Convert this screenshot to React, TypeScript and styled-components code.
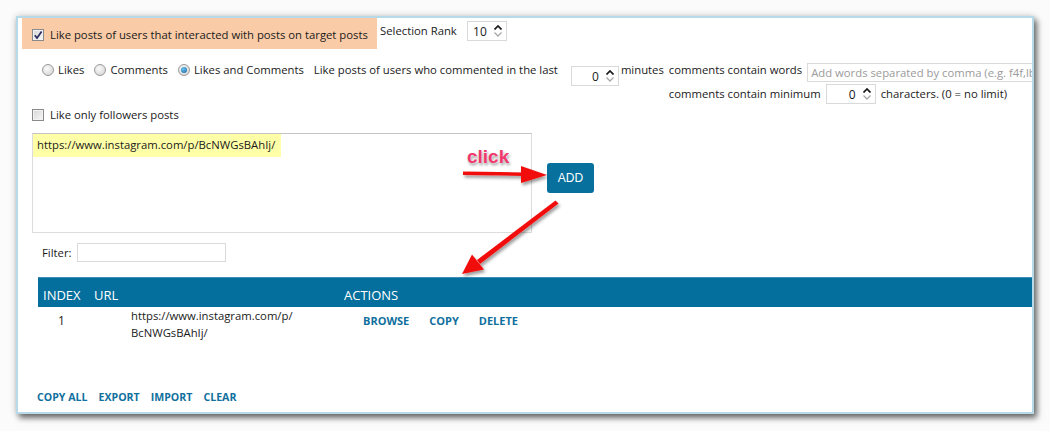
import React from 'react'
import styled, { createGlobalStyle } from 'styled-components'

const GlobalStyle = createGlobalStyle`
  html, body {
    margin: 0;
    padding: 0;
    background: #fbfbfb;
  }
  body {
    font-family: 'Open Sans', 'Noto Sans', sans-serif;
    font-size: 11.3px;
    color: #1a1a1a;
  }
`

const Screen = styled.div`
  width: 1050px;
  height: 431px;
  padding: 16px 0 0 16px;
  box-sizing: border-box;
  overflow: hidden;
`

const Window = styled.div`
  position: relative;
  width: 1018px;
  height: 398px;
  box-sizing: border-box;
  border: 2px solid #b7dae8;
  background: #fff;
  box-shadow: 3px 4px 6px rgba(0, 0, 0, 0.55), 0 0 7px rgba(0, 0, 0, 0.18);
  overflow: hidden;
  display: flex;
  flex-direction: column;
`

const TopRow = styled.div`
  display: flex;
  align-items: flex-start;
  padding-left: 4px;
`

const Highlight = styled.div`
  width: 355px;
  height: 31px;
  box-sizing: border-box;
  padding: 3px 0 0 10px;
  background: #f9cba7;
  display: flex;
  align-items: center;
  gap: 6px;
`

const Text = styled.span<{ $ml?: number; $mt?: number }>`
  line-height: 16px;
  white-space: nowrap;
  margin-left: ${p => p.$ml ?? 0}px;
  margin-top: ${p => p.$mt ?? 0}px;
`

const Box = styled.span`
  width: 12px;
  height: 12px;
  box-sizing: border-box;
  border: 1px solid #8a8a8a;
  background: linear-gradient(135deg, #d6d6d6, #f7f7f7);
  box-shadow: inset 0 0 0 1px #f2f2f2;
  display: inline-flex;
  align-items: center;
  justify-content: center;
  flex: none;
`

const Round = styled.span<{ $checked?: boolean }>`
  width: 12px;
  height: 12px;
  box-sizing: border-box;
  border-radius: 50%;
  border: 1px solid #9a9a9a;
  background: radial-gradient(circle at 40% 35%, #fafafa, #cfcfcf);
  display: inline-flex;
  align-items: center;
  justify-content: center;
  flex: none;

  &::after {
    content: '';
    display: ${p => (p.$checked ? 'block' : 'none')};
    width: 6px;
    height: 6px;
    border-radius: 50%;
    background: radial-gradient(circle at 40% 35%, #6cc4f2, #0d5f9c);
  }
`

const Option = styled.label`
  display: flex;
  align-items: center;
  gap: 4px;
  height: 16px;
`

const SpinBox = styled.div<{ $w: number; $ml?: number; $mt?: number }>`
  width: ${p => p.$w}px;
  height: 20px;
  box-sizing: border-box;
  margin-left: ${p => p.$ml ?? 0}px;
  margin-top: ${p => p.$mt ?? 0}px;
  border: 1px solid #d9d9d9;
  background: #fff;
  display: flex;
  align-items: center;
  justify-content: flex-end;
  padding-right: 4px;
  flex: none;
  font-size: 12px;
`

const SpinArrows = styled.div`
  display: flex;
  flex-direction: column;
  gap: 2px;
  margin-left: 7px;
`

const OptionsRow = styled.div`
  display: flex;
  align-items: flex-start;
  margin-top: 13px;
  padding-left: 24px;
`

const Radios = styled.div`
  display: flex;
  gap: 10px;
`

const RightGroup = styled.div`
  display: flex;
  flex-direction: column;
  margin-left: 5px;
`

const FieldRow = styled.div`
  display: flex;
  align-items: flex-start;
`

const WordsInput = styled.input`
  width: 240px;
  height: 19px;
  box-sizing: border-box;
  margin: 1px 0 0 5px;
  border: 1px solid #dadada;
  padding: 0 3px;
  font-family: inherit;
  font-size: 11.3px;
  flex: none;

  &::placeholder {
    color: #9b9b9b;
  }
`

const FollowersRow = styled.div`
  display: flex;
  align-items: center;
  gap: 6px;
  margin-top: 3px;
  padding-left: 14px;
  height: 16px;
`

const InputArea = styled.div`
  display: flex;
  align-items: flex-start;
  margin-top: 10px;
  padding-left: 14px;
`

const UrlBox = styled.div`
  width: 500px;
  height: 100px;
  box-sizing: border-box;
  border: 1px solid #dcdcdc;
  border-top-color: #c4c4c4;
`

const UrlMark = styled.span`
  display: inline-block;
  background: #ffffa8;
  padding: 3px 6px 4px 4px;
  line-height: 16px;
  font-size: 11.3px;
`

const AddButton = styled.button`
  width: 47px;
  height: 30px;
  margin: 30px 0 0 15px;
  border: none;
  border-radius: 3px;
  background: #07709d;
  color: #fff;
  font-family: 'Liberation Sans', Arial, sans-serif;
  font-size: 12px;
  padding: 0;
`

const FilterRow = styled.div`
  display: flex;
  align-items: center;
  margin-top: 10px;
  padding-left: 24px;
`

const FilterInput = styled.input`
  width: 149px;
  height: 19px;
  box-sizing: border-box;
  margin-left: 5px;
  border: 1px solid #dadada;
`

const Table = styled.div`
  margin: 15px 0 0 20px;
`

const HeadRow = styled.div`
  display: grid;
  grid-template-columns: 56px 250px 1fr;
  height: 30px;
  box-sizing: border-box;
  padding-top: 4px;
  align-items: center;
  background: #046e9c;
  border-top: 1px solid #3b8fb6;
  color: #fff;
  font-size: 13px;
`

const HeadCell = styled.div<{ $pl?: number }>`
  padding-left: ${p => p.$pl ?? 0}px;
`

const BodyRow = styled.div`
  display: grid;
  grid-template-columns: 56px 250px 1fr;
  align-items: flex-start;
`

const IndexCell = styled.div`
  padding: 6px 0 0 20px;
  line-height: 16px;
  font-size: 12px;
`

const UrlCell = styled.div`
  padding-left: 37px;
  width: 175px;
  line-height: 17px;
  font-size: 11.3px;
`

const Actions = styled.div`
  display: flex;
  gap: 20px;
  padding: 6px 0 0 19px;
`

const LinkText = styled.a<{ $size?: number }>`
  color: #11709e;
  font-weight: 700;
  font-size: ${p => p.$size ?? 10.6}px;
  line-height: 16px;
  text-decoration: none;
  cursor: pointer;
`

const Footer = styled.div`
  display: flex;
  gap: 11px;
  margin-top: auto;
  padding: 0 0 7px 19px;
`

const Overlay = styled.svg`
  position: absolute;
  left: 0;
  top: 0;
  width: 100%;
  height: 100%;
  pointer-events: none;
`

const ClickLabel = styled.span`
  position: absolute;
  left: 449px;
  top: 129px;
  font-family: 'Liberation Sans', Arial, sans-serif;
  font-weight: 700;
  font-size: 19px;
  line-height: 19px;
  color: #f0386c;
  text-shadow: 0 0 2px #fff, 1px 2px 3px rgba(0, 0, 0, 0.45);
`

const CheckBox = ({ checked }: { checked?: boolean }) => (
  <Box>
    {checked && (
      <svg width="10" height="10" viewBox="0 0 10 10">
        <path d="M1.8 5.2 L4 8 L8.6 1.4" fill="none" stroke="#2d2d62" strokeWidth="1.7" />
      </svg>
    )}
  </Box>
)

const Spin = ({ value, w, ml, mt }: { value: string; w: number; ml?: number; mt?: number }) => (
  <SpinBox $w={w} $ml={ml} $mt={mt}>
    <span>{value}</span>
    <SpinArrows>
      <svg width="8" height="5" viewBox="0 0 8 5">
        <path d="M0.5 4.5 L4 1 L7.5 4.5" fill="none" stroke="#1a1a1a" strokeWidth="1.7" />
      </svg>
      <svg width="8" height="5" viewBox="0 0 8 5">
        <path d="M0.5 0.5 L4 4 L7.5 0.5" fill="none" stroke="#a8a8a8" strokeWidth="1.3" />
      </svg>
    </SpinArrows>
  </SpinBox>
)

const App = () => {
  return (
    <>
      <GlobalStyle />
      <Screen>
        <Window>
          <TopRow>
            <Highlight>
              <CheckBox checked />
              <Text>Like posts of users that interacted with posts on target posts</Text>
            </Highlight>
            <Text $ml={3} $mt={5}>Selection Rank</Text>
            <Spin value="10" w={40} ml={10} mt={3} />
          </TopRow>

          <OptionsRow>
            <Radios>
              <Option><Round /><Text>Likes</Text></Option>
              <Option><Round /><Text>Comments</Text></Option>
              <Option><Round $checked /><Text>Likes and Comments</Text></Option>
            </Radios>
            <Text $ml={10}>Like posts of users who commented in the last</Text>
            <Spin value="0" w={48} ml={13} mt={4} />
            <Text $ml={2}>minutes</Text>
            <RightGroup>
              <FieldRow>
                <Text>comments contain words</Text>
                <WordsInput placeholder="Add words separated by comma (e.g. f4f,lbl,l4l)" />
              </FieldRow>
              <FieldRow>
                <Text $mt={4}>comments contain minimum</Text>
                <Spin value="0" w={50} ml={5} mt={2} />
                <Text $ml={5} $mt={4}>characters. (0 = no limit)</Text>
              </FieldRow>
            </RightGroup>
          </OptionsRow>

          <FollowersRow>
            <CheckBox />
            <Text>Like only followers posts</Text>
          </FollowersRow>

          <InputArea>
            <UrlBox>
              <UrlMark>https://www.instagram.com/p/BcNWGsBAhIj/</UrlMark>
            </UrlBox>
            <AddButton>ADD</AddButton>
          </InputArea>

          <FilterRow>
            <Text>Filter:</Text>
            <FilterInput />
          </FilterRow>

          <Table>
            <HeadRow>
              <HeadCell $pl={5}>INDEX</HeadCell>
              <HeadCell>URL</HeadCell>
              <HeadCell>ACTIONS</HeadCell>
            </HeadRow>
            <BodyRow>
              <IndexCell>1</IndexCell>
              <UrlCell>https://www.instagram.com/p/<wbr />BcNWGsBAhIj/</UrlCell>
              <Actions>
                <LinkText $size={11}>BROWSE</LinkText>
                <LinkText $size={11}>COPY</LinkText>
                <LinkText $size={11}>DELETE</LinkText>
              </Actions>
            </BodyRow>
          </Table>

          <Footer>
            <LinkText>COPY ALL</LinkText>
            <LinkText>EXPORT</LinkText>
            <LinkText>IMPORT</LinkText>
            <LinkText>CLEAR</LinkText>
          </Footer>

          <ClickLabel>click</ClickLabel>
          <Overlay>
            <defs>
              <filter id="arrowShadow" x="-20%" y="-20%" width="140%" height="160%">
                <feDropShadow dx="1.5" dy="2.5" stdDeviation="1.8" floodColor="#000" floodOpacity="0.4" />
              </filter>
            </defs>
            <g fill="#f21010" stroke="none" filter="url(#arrowShadow)">
              <path d="M445 153.5 L506 154.5 L506 158 L445 157 Z" />
              <path d="M503 148 L529 157 L503 165 Z" />
              <path d="M537.5 182.5 L540.5 185.5 L462 246 L459 242 Z" />
              <path d="M444 256 L454 236.5 L466 251.5 Z" />
            </g>
          </Overlay>
        </Window>
      </Screen>
    </>
  )
}

export default App
